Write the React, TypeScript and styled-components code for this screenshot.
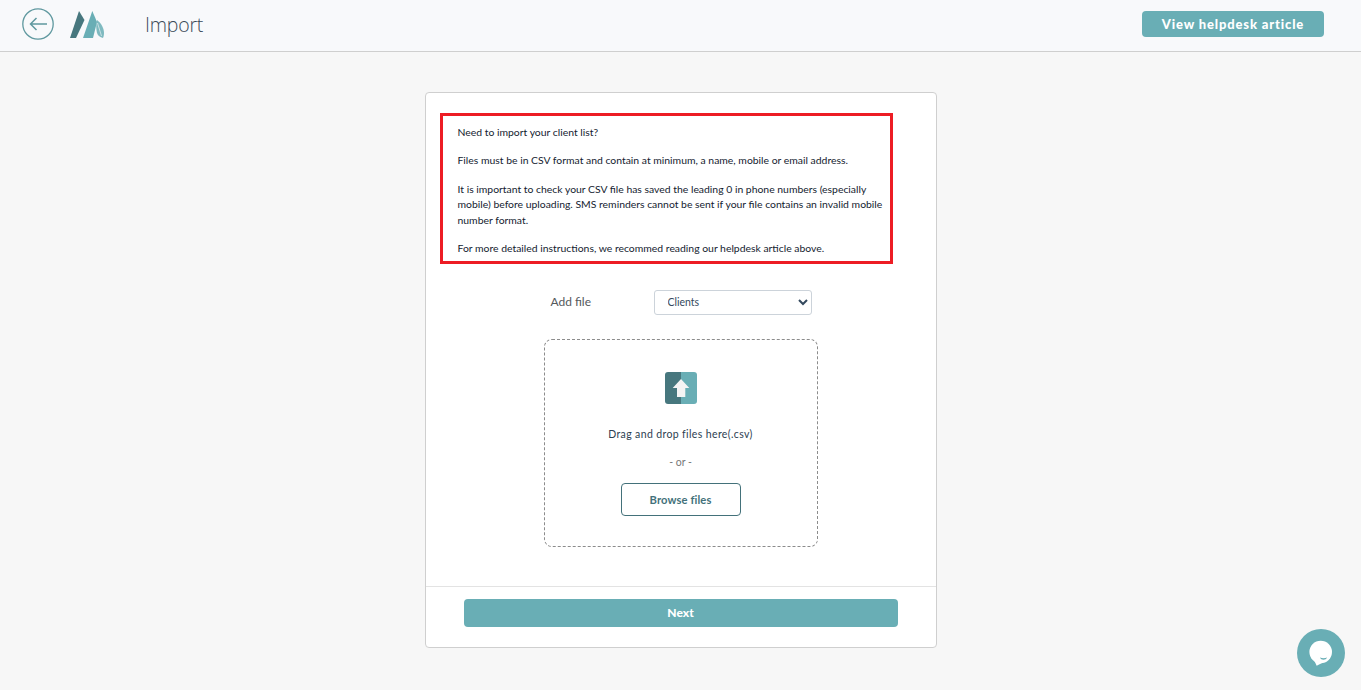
import React, { useState } from "react"
import styled, { createGlobalStyle } from "styled-components"

const GlobalStyle = createGlobalStyle`
  html, body {
    margin: 0;
    padding: 0;
    height: 100%;
    background: #f7f7f7;
    overflow: hidden;
  }
  * {
    box-sizing: border-box;
  }
  body {
    font-family: Lato, "Liberation Sans", sans-serif;
    color: #2c3e50;
  }
`
const Header = styled.header`
  display: flex;
  align-items: center;
  height: 52px;
  padding: 0 37px 3px 22px;
  background: #f8f9fb;
  border-bottom: 1px solid #cfcfcf;
`
const BackButton = styled.button`
  display: flex;
  width: 32px;
  height: 32px;
  padding: 0;
  border: none;
  background: none;
  cursor: pointer;
`
const Logo = styled.div`
  display: flex;
  width: 36px;
  height: 28px;
  margin-left: 16px;
`
const Title = styled.h1`
  margin: 0 0 0 39px;
  font-family: "Open Sans", sans-serif;
  font-size: 19.5px;
  font-weight: 300;
  letter-spacing: -0.2px;
  color: #3a4a58;
`
const HelpButton = styled.button`
  margin-left: auto;
  width: 182px;
  height: 26px;
  border: none;
  border-radius: 4px;
  background: #69aeb5;
  color: #fff;
  font-family: Lato, sans-serif;
  font-size: 13px;
  font-weight: 900;
  letter-spacing: 0.85px;
  cursor: pointer;
`
const Main = styled.main`
  display: flex;
  justify-content: center;
  padding-top: 40px;
`
const Card = styled.section`
  width: 512px;
  height: 556px;
  display: flex;
  flex-direction: column;
  background: #fff;
  border: 1px solid #cfcfcf;
  border-radius: 4px;
`
const Body = styled.div`
  flex: 1;
  display: flex;
  flex-direction: column;
  align-items: center;
  padding-top: 20px;
  border-bottom: 1px solid #e3e3e3;
`
const Notice = styled.div`
  align-self: flex-start;
  width: 453px;
  height: 151px;
  margin-left: 14px;
  padding: 8.6px 4px 0 15px;
  border: 3px solid #ed1c24;
  font-size: 10.4px;
  line-height: 15.5px;
  color: #14222f;
`
const Para = styled.p`
  margin: 0 0 13px;
`
const FileRow = styled.div`
  display: flex;
  align-items: center;
  width: 262px;
  margin-top: 26px;
`
const FileLabel = styled.label`
  width: 104px;
  padding: 0 0 2px 1px;
  font-size: 12px;
  color: #55595c;
`
const FileSelect = styled.select`
  width: 158px;
  height: 25px;
  padding: 0 0 2px 9px;
  border: 1px solid #ccd3da;
  border-radius: 3px;
  background: #fff;
  color: #34495e;
  font-family: Lato, sans-serif;
  font-size: 10.5px;
`
const DropZone = styled.div`
  display: flex;
  flex-direction: column;
  align-items: center;
  width: 274px;
  height: 208px;
  margin-top: 24px;
  padding-top: 32px;
  border: 1px dashed #8c8c8c;
  border-radius: 8px;
`
const UploadIcon = styled.svg`
  display: block;
  width: 32px;
  height: 32px;
`
const DropText = styled.div`
  margin-top: 23px;
  font-size: 10.5px;
  letter-spacing: 0.37px;
  line-height: 14px;
  color: #2c3e50;
`
const OrText = styled.div`
  margin-top: 14px;
  font-size: 10.5px;
  line-height: 14px;
  color: #777;
`
const BrowseButton = styled.button`
  width: 120px;
  height: 33px;
  margin-top: 14px;
  border: 1px solid #43717a;
  border-radius: 4px;
  background: #fff;
  color: #43717a;
  font-family: Lato, sans-serif;
  font-size: 11.2px;
  font-weight: 700;
  letter-spacing: 0.1px;
  cursor: pointer;
`
const Footer = styled.div`
  display: flex;
  justify-content: center;
  flex: 0 0 60px;
  padding-top: 12px;
`
const NextButton = styled.button`
  width: 434px;
  height: 28px;
  padding: 0 0 2px;
  border: none;
  border-radius: 4px;
  background: #69aeb5;
  color: #fff;
  font-family: Lato, sans-serif;
  font-size: 12px;
  font-weight: 900;
  cursor: pointer;
`
const ChatBubble = styled.button`
  position: fixed;
  right: 16px;
  bottom: 13px;
  width: 48px;
  height: 48px;
  display: flex;
  align-items: center;
  justify-content: center;
  padding: 0;
  border: none;
  border-radius: 50%;
  background: #69aeb5;
  cursor: pointer;
`

export default function App() {
  const [kind, setKind] = useState("Clients")
  return (
    <>
      <GlobalStyle />
      <Header>
        <BackButton aria-label="Back">
          <svg width="32" height="32" viewBox="0 0 32 32" fill="none" stroke="#5f989f" strokeWidth="1.3">
            <circle cx="16" cy="16" r="15.2" />
            <path d="M25 16H8.5M14.5 10l-6 6 6 6" strokeWidth="1.5" />
          </svg>
        </BackButton>
        <Logo>
          <svg width="36" height="28" viewBox="0 0 36 28">
            <path d="M0 28 L9 1 L14.5 10 L6 28Z" fill="#47777e" />
            <path d="M13 28 L22.3 1 L27 12 L23 28Z" fill="#69aeb5" />
            <path d="M27 10c4 3 7 8 7 13 0 2-.5 4-1 5-3-1-5-2-6-5-1-4-1-9 0-13z" fill="#7fbac0" />
            <path d="M27.5 13l4 13" stroke="#e6f1f2" strokeWidth="0.7" fill="none" />
          </svg>
        </Logo>
        <Title>Import</Title>
        <HelpButton>View helpdesk article</HelpButton>
      </Header>
      <Main>
        <Card>
          <Body>
            <Notice>
              <Para>Need to import your client list?</Para>
              <Para>Files must be in CSV format and contain at minimum, a name, mobile or email address.</Para>
              <Para>
                It is important to check your CSV file has saved the leading 0 in phone numbers (especially mobile)
                before uploading. SMS reminders cannot be sent if your file contains an invalid mobile number format.
              </Para>
              <Para>For more detailed instructions, we recommed reading our helpdesk article above.</Para>
            </Notice>
            <FileRow>
              <FileLabel htmlFor="kind">Add file</FileLabel>
              <FileSelect id="kind" value={kind} onChange={(e) => setKind(e.target.value)}>
                <option>Clients</option>
                <option>Services</option>
              </FileSelect>
            </FileRow>
            <DropZone>
              <UploadIcon viewBox="0 0 32 32">
                <path d="M3 0H16V32H3a3 3 0 0 1-3-3V3a3 3 0 0 1 3-3z" fill="#47777e" />
                <path d="M16 0H29a3 3 0 0 1 3 3V29a3 3 0 0 1-3 3H16z" fill="#69aeb5" />
                <path d="M16 7l8.3 9H20.3v9H12v-9H7.7z" fill="#f4f4f4" />
              </UploadIcon>
              <DropText>Drag and drop files here(.csv)</DropText>
              <OrText>- or -</OrText>
              <BrowseButton>Browse files</BrowseButton>
            </DropZone>
          </Body>
          <Footer>
            <NextButton>Next</NextButton>
          </Footer>
        </Card>
      </Main>
      <ChatBubble aria-label="Chat">
        <svg width="24" height="26" viewBox="0 0 24 26">
          <circle cx="11.7" cy="12" r="11.3" fill="#fff" />
          <path d="M4.5 19L7.7 25.7 14 22.5z" fill="#fff" />
          <path d="M11 17.6c2 .7 5 .7 7 0-1 3-6 3-7 0z" fill="#69aeb5" />
        </svg>
      </ChatBubble>
    </>
  )
}
